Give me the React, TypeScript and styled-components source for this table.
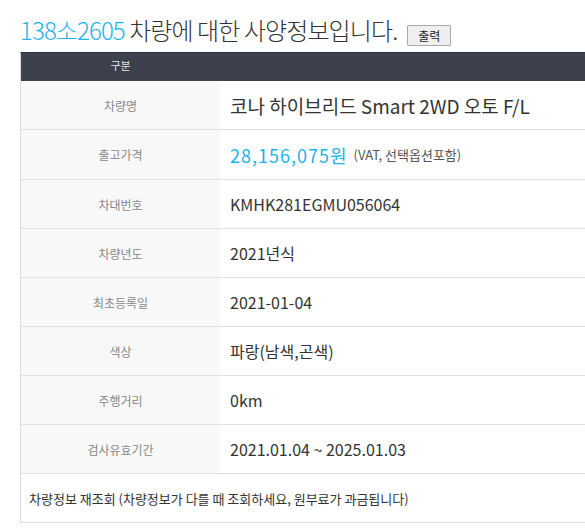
import React from "react";
import styled, { createGlobalStyle } from "styled-components";

const GlobalStyle = createGlobalStyle`
  html, body {
    margin: 0;
    padding: 0;
    overflow: hidden;
    background: #fff;
  }
  body {
    font-family: "Noto Sans CJK KR", "Noto Sans", sans-serif;
  }
`;

const Wrap = styled.div`
  width: 640px;
  padding: 14px 0 0 20px;
`;

const TitleBar = styled.div`
  display: flex;
  align-items: flex-end;
  gap: 10px;
  height: 38px;
`;

const Title = styled.h2`
  margin: 0 0 6px;
  font-size: 24px;
  font-weight: 300;
  letter-spacing: -0.9px;
  line-height: 32px;
  color: #333;
  span {
    color: #1eb3ea;
  }
`;

const PrintButton = styled.button`
  margin-bottom: 6px;
  height: 21px;
  width: 44px;
  padding: 0;
  font-family: "Noto Sans CJK KR", sans-serif;
  font-size: 12px;
  color: #222;
  background: #efefef;
  border: 1px solid #a9a9a9;
  border-radius: 1px;
`;

const Table = styled.div`
  border-top: 1px solid #2f3440;
  border-left: 1px solid #ddd;
`;

const HeadRow = styled.div`
  display: grid;
  grid-template-columns: 199px 1fr;
  height: 28px;
  background: #3c414d;
  color: #e6e6e6;
  font-size: 11px;
  align-items: center;
`;

const HeadCell = styled.div`
  text-align: center;
  margin-top: -4px;
`;

const Row = styled.div<{ $tall?: boolean }>`
  display: grid;
  grid-template-columns: 199px 1fr;
  height: ${(p) => (p.$tall ? "49px" : "48px")};
  border-bottom: 1px solid #e0e0e0;
`;

const Label = styled.div`
  display: flex;
  align-items: center;
  justify-content: center;
  background: #f8f8f8;
  color: #888;
  font-size: 12px;
`;

const Value = styled.div<{ $big?: boolean }>`
  display: flex;
  align-items: center;
  gap: 6px;
  padding-left: 10px;
  color: #333;
  font-size: ${(p) => (p.$big ? "19px" : "16px")};
`;

const Price = styled.span`
  color: #1eb3ea;
  font-size: 18px;
  letter-spacing: 1px;
`;

const Note = styled.span`
  color: #555;
  font-size: 13px;
`;

const FullRow = styled.div`
  display: flex;
  align-items: center;
  height: 48px;
  padding-left: 8px;
  border-bottom: 1px solid #ddd;
  font-size: 13px;
  color: #333;
`;

const rows = [
  { label: "출고가격", value: null },
  { label: "차대번호", value: "KMHK281EGMU056064" },
  { label: "차량년도", value: "2021년식" },
  { label: "최초등록일", value: "2021-01-04" },
  { label: "색상", value: "파랑(남색,곤색)" },
  { label: "주행거리", value: "0km" },
  { label: "검사유효기간", value: "2021.01.04 ~ 2025.01.03" },
];

const App = () => {
  return (
    <Wrap>
      <GlobalStyle />
      <TitleBar>
        <Title>
          <span>138소2605</span> 차량에 대한 사양정보입니다.
        </Title>
        <PrintButton>출력</PrintButton>
      </TitleBar>
      <Table>
        <HeadRow>
          <HeadCell>구분</HeadCell>
          <div />
        </HeadRow>
        <Row>
          <Label>차량명</Label>
          <Value $big>코나 하이브리드 Smart 2WD 오토 F/L</Value>
        </Row>
        {rows.map((r) => (
          <Row key={r.label} $tall={r.value === null}>
            <Label>{r.label}</Label>
            {r.value === null ? (
              <Value>
                <Price>28,156,075원</Price>
                <Note>(VAT, 선택옵션포함)</Note>
              </Value>
            ) : (
              <Value>{r.value}</Value>
            )}
          </Row>
        ))}
        <FullRow>차량정보 재조회 (차량정보가 다를 때 조회하세요, 원부료가 과금됩니다)</FullRow>
      </Table>
    </Wrap>
  );
};

export default App;
